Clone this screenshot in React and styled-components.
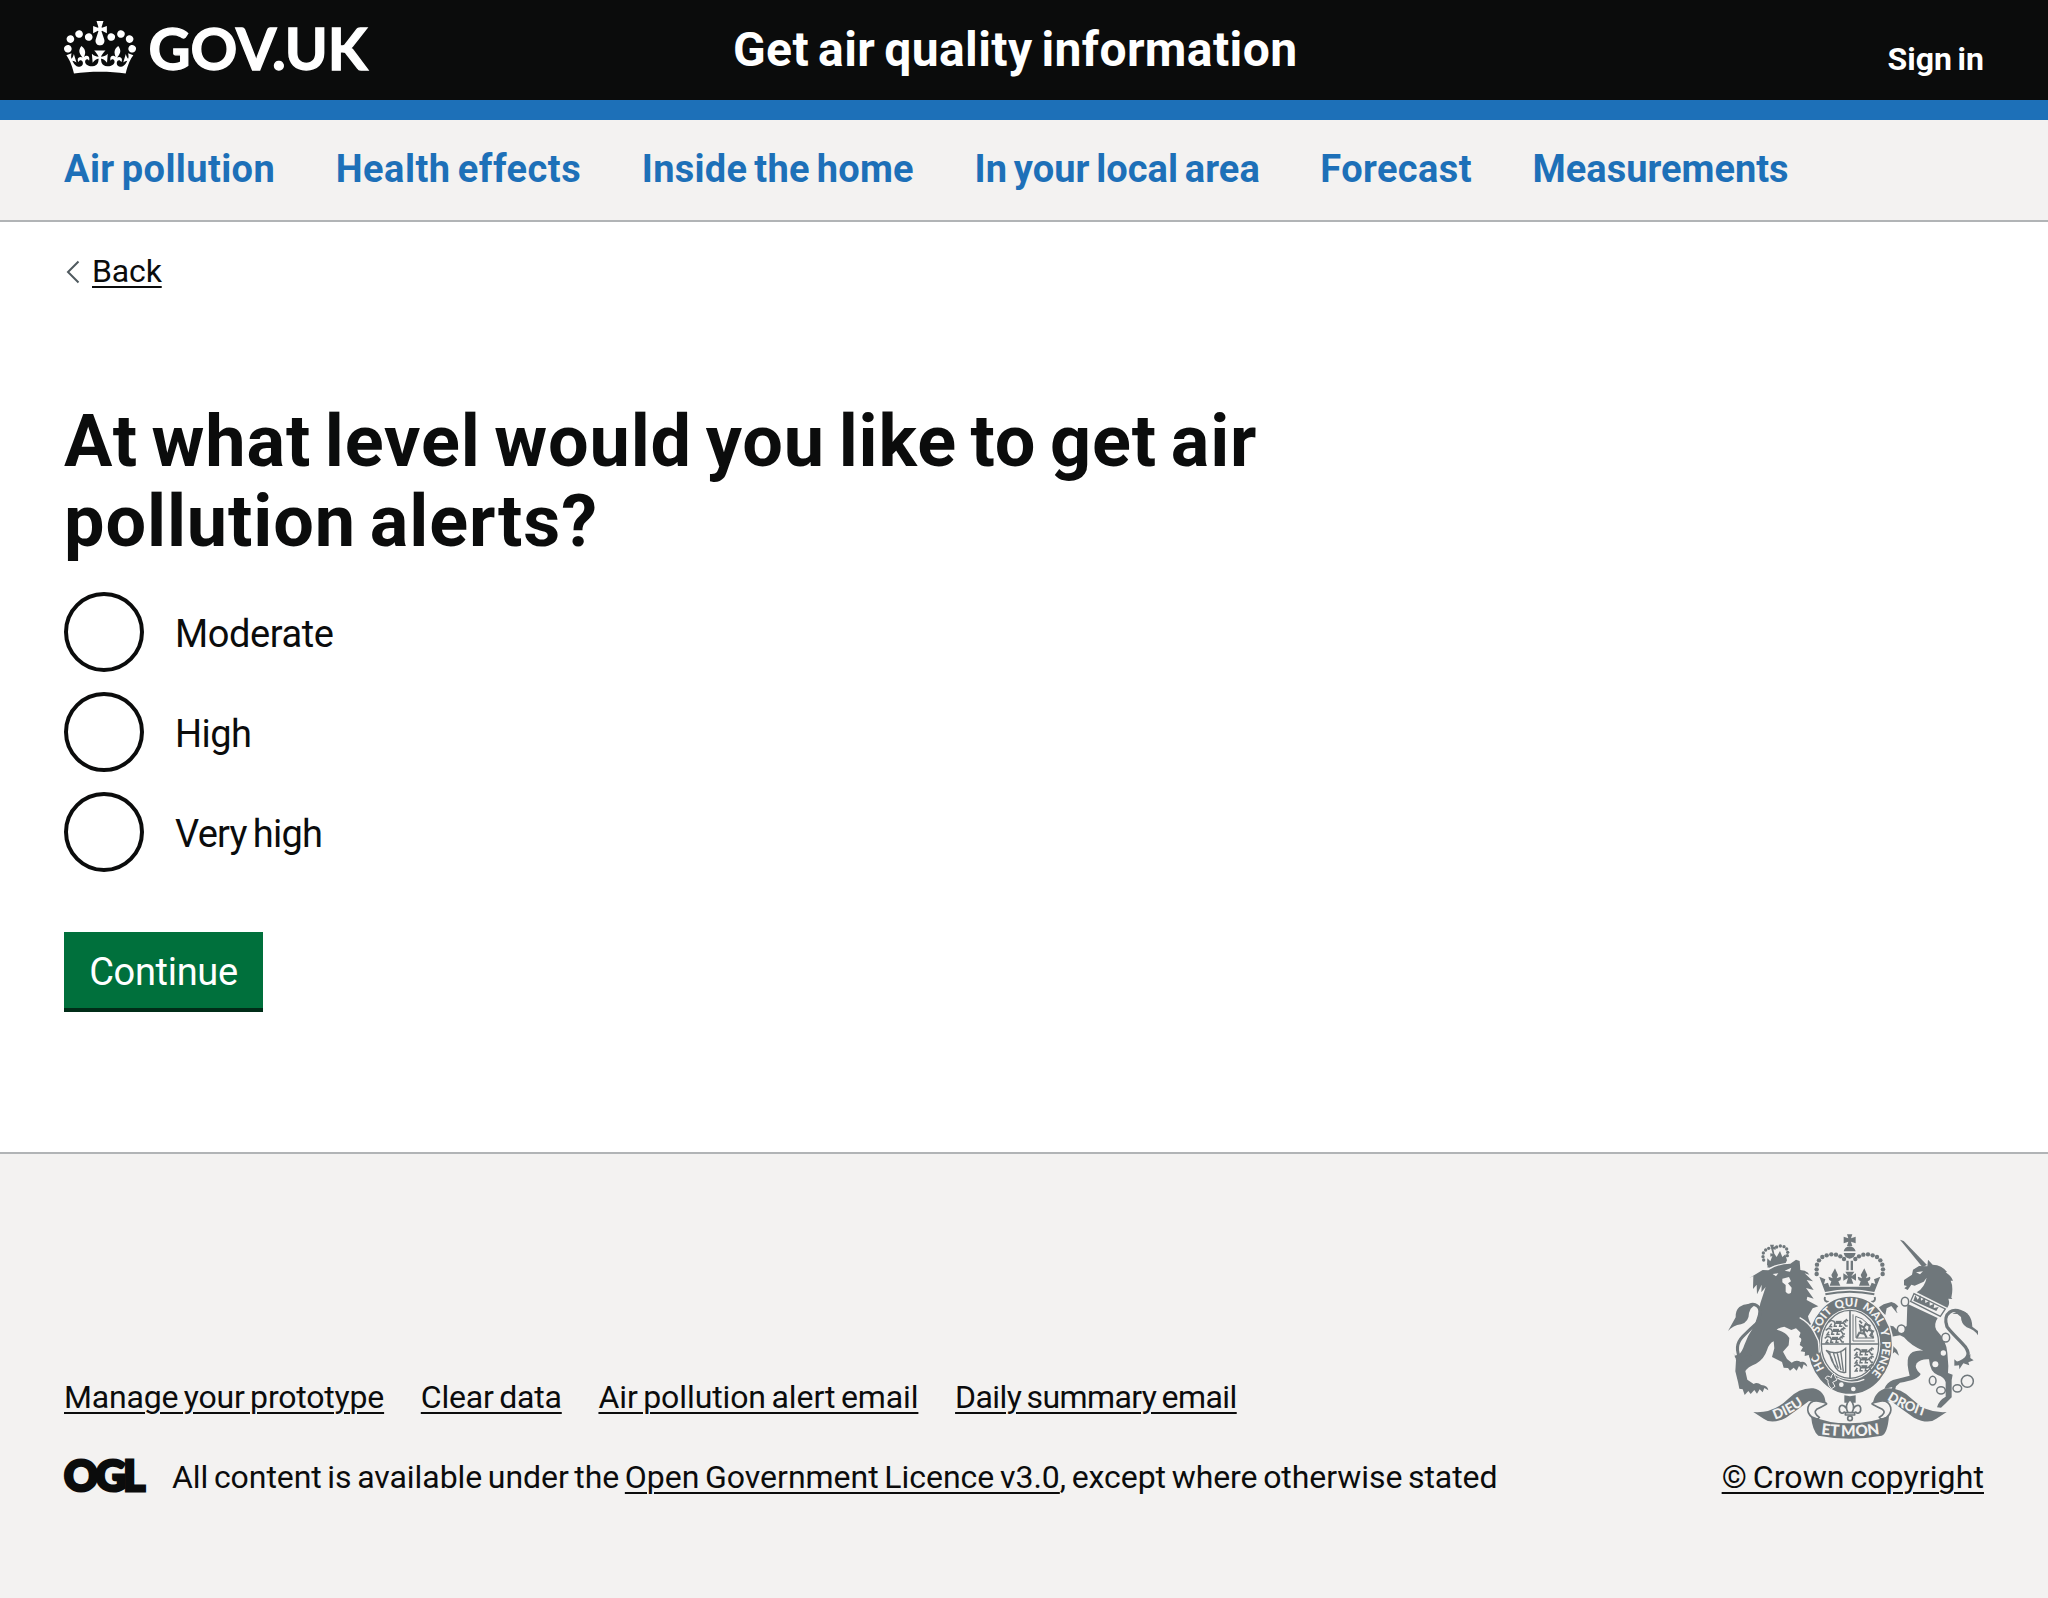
import React from "react";
import styled, { createGlobalStyle } from "styled-components";

const INK = "#0b0c0c";
const BLUE = "#1d70b8";
const PAPER = "#f3f2f1";
const RULE = "#b1b4b6";
const CREST = "#6f777b";

const GlobalStyle = createGlobalStyle`
  *, *::before, *::after { box-sizing: border-box; word-spacing: -0.07em; }
  body {
    margin: 0;
    background: #fff;
    color: ${INK};
    font-family: Roboto, "Noto Sans", sans-serif;
    font-size: 38px;
    line-height: 50px;
    -webkit-font-smoothing: antialiased;
  }
`;

const Page = styled.div`
  display: flex;
  flex-direction: column;
  min-height: 1598px;
`;

const Header = styled.header`
  display: grid;
  grid-template-columns: 669px 1fr auto;
  height: 120px;
  padding: 0 64px;
  background: ${INK};
  border-bottom: 20px solid ${BLUE};
  color: #fff;
`;

const Brand = styled.a`
  display: flex;
  align-items: flex-start;
  color: #fff;
  text-decoration: none;
  padding-top: 21px;
`;

const CrownIcon = styled.svg`
  width: 72px;
  height: 53px;
  flex: none;
`;

const Wordmark = styled.span`
  margin: -1px 0 0 12.5px;
  font-family: Lato, sans-serif;
  font-size: 58px;
  font-weight: 700;
  line-height: 56px;
  letter-spacing: -0.1px;
  -webkit-text-stroke: 1.3px #fff;
`;

const ServiceName = styled.a`
  padding-top: 20px;
  font-size: 48px;
  font-weight: 700;
  line-height: 60px;
  letter-spacing: ${(p) => p.$track}px;
  white-space: nowrap;
`;

const SignIn = styled.a`
  padding-top: 39px;
  font-size: 32px;
  font-weight: 700;
  line-height: 40px;
  letter-spacing: ${(p) => p.$track}px;
`;

const Nav = styled.nav`
  display: flex;
  gap: 60.6px;
  height: 102px;
  padding: 24px 64px 0;
  background: ${PAPER};
  border-bottom: 2px solid ${RULE};
`;

const NavLink = styled.a`
  color: ${BLUE};
  font-weight: 700;
  line-height: 50px;
  letter-spacing: ${(p) => p.$track}px;
  white-space: nowrap;
`;

const Main = styled.main`
  display: flex;
  flex-direction: column;
  align-items: flex-start;
  height: 930px;
  padding: 30px 64px 0;
`;

const TextLink = styled.a`
  color: ${INK};
  font-size: 32px;
  line-height: 40px;
  letter-spacing: ${(p) => p.$track}px;
  text-decoration: underline;
  text-decoration-thickness: 2px;
  text-underline-offset: 4px;
  white-space: nowrap;
`;

const BackRow = styled.div`
  display: flex;
  align-items: center;
  gap: 12px;
  height: 38px;
  padding-left: 2px;
`;

const Chevron = styled.svg`
  width: 14px;
  height: 24px;
  margin-top: 2px;
`;

const Question = styled.h1`
  width: 1260px;
  margin: 112px 0 0;
  font-size: 72px;
  font-weight: 700;
  line-height: 80px;
`;

const Line = styled.span`
  display: block;
  letter-spacing: ${(p) => p.$track}px;
  white-space: nowrap;
`;

const Radios = styled.div`
  display: flex;
  flex-direction: column;
  gap: 20px;
  margin-top: 30px;
`;

const RadioRow = styled.label`
  display: flex;
  align-items: center;
  gap: 31px;
  height: 80px;
`;

const RadioInput = styled.input`
  appearance: none;
  width: 80px;
  height: 80px;
  margin: 0;
  border: 4px solid ${INK};
  border-radius: 50%;
`;

const RadioText = styled.span`
  padding-top: 3px;
  letter-spacing: ${(p) => p.$track}px;
`;

const Button = styled.button`
  width: 199px;
  height: 80px;
  margin-top: 60px;
  padding: 0;
  border: 0;
  border-radius: 0;
  background: #00703c;
  box-shadow: inset 0 -4px 0 #002d18;
  color: #fff;
  font: inherit;
  line-height: 80px;
  letter-spacing: ${(p) => p.$track}px;
`;

const Footer = styled.footer`
  display: flex;
  justify-content: space-between;
  flex: 1;
  padding: 80px 64px 0;
  background: ${PAPER};
  border-top: 2px solid ${RULE};
`;

const FooterMeta = styled.div`
  display: flex;
  flex-direction: column;
  gap: 40px;
  padding-top: 143px;
`;

const FooterLinks = styled.div`
  display: flex;
  gap: 36.7px;
`;

const Licence = styled.div`
  display: flex;
  align-items: center;
  height: 40px;
  font-size: 32px;
  line-height: 40px;
  white-space: nowrap;
`;

const LicenceText = styled.span`
  letter-spacing: ${(p) => p.$track}px;
`;

const OglMark = styled.span`
  width: 108px;
  margin-top: -5px;
  font-family: Lato, sans-serif;
  font-size: 42px;
  font-weight: 900;
  letter-spacing: -2.6px;
  -webkit-text-stroke: 3px ${INK};
`;

const Copyright = styled.div`
  display: flex;
  flex-direction: column;
  align-items: flex-end;
`;

const Crest = styled.svg`
  width: 250px;
  height: 205px;
  margin: 0 6px 18px 0;
`;

const NAV = [
  ["Air pollution", 0.38],
  ["Health effects", 0.49],
  ["Inside the home", 0.25],
  ["In your local area", 0.03],
  ["Forecast", 0.38],
  ["Measurements", 0],
];

const LEVELS = [
  ["Moderate", -0.4],
  ["High", -0.6],
  ["Very high", -0.75],
];

const LINKS = [
  ["Manage your prototype", -0.19],
  ["Clear data", -0.19],
  ["Air pollution alert email", -0.1],
  ["Daily summary email", -0.57],
];

const MOTTO = [
  ["HO", 64],
  ["SOIT", 174],
  ["QUI", 264],
  ["MAL", 343],
  ["Y", 428],
  ["PENSE", 463],
];

function Crown() {
  return (
    <CrownIcon viewBox="0 0 132 97" aria-hidden="true">
      <path
        fill="currentColor"
        fillRule="evenodd"
        d="M25 30.2c3.5 1.5 7.7-.2 9.1-3.7 1.5-3.6-.2-7.8-3.9-9.2-3.6-1.4-7.6.3-9.1 3.9-1.4 3.5.3 7.5 3.9 9zM9 39.5c3.6 1.5 7.8-.2 9.2-3.7 1.5-3.6-.2-7.8-3.9-9.1-3.6-1.5-7.6.2-9.1 3.8-1.4 3.5.3 7.5 3.8 9zM4.4 57.2c3.5 1.5 7.7-.2 9.1-3.8 1.5-3.6-.2-7.7-3.9-9.1-3.5-1.5-7.6.3-9.1 3.8-1.4 3.5.3 7.6 3.9 9.1zm38.3-21.4c3.5 1.5 7.7-.2 9.1-3.8 1.5-3.6-.2-7.7-3.9-9.1-3.6-1.5-7.6.3-9.1 3.8-1.3 3.6.4 7.7 3.9 9.1zm64.4-5.6c-3.6 1.5-7.8-.2-9.1-3.7-1.5-3.6.2-7.8 3.8-9.2 3.6-1.4 7.7.3 9.2 3.9 1.3 3.5-.4 7.5-3.9 9zm15.9 9.3c-3.6 1.5-7.7-.2-9.1-3.7-1.5-3.6.2-7.8 3.7-9.1 3.6-1.5 7.7.2 9.2 3.8 1.5 3.5-.3 7.5-3.8 9zm4.7 17.7c-3.6 1.5-7.8-.2-9.2-3.8-1.5-3.6.2-7.7 3.9-9.1 3.6-1.5 7.7.3 9.2 3.8 1.3 3.5-.4 7.6-3.9 9.1zM89.3 35.8c-3.6 1.5-7.8-.2-9.2-3.8-1.4-3.6.2-7.7 3.9-9.1 3.6-1.5 7.7.3 9.2 3.8 1.4 3.6-.3 7.7-3.9 9.1zM69.7 17.7l8.9 4.7V9.3l-8.9 2.8c-.2-.3-.5-.6-.9-.9L72.4 0H59.6l3.5 11.2c-.3.3-.6.5-.9.9l-8.8-2.8v13.1l8.8-4.7c.3.3.6.7.9.9l-5 15.4v.1c-.2.8-.4 1.6-.4 2.4 0 4.1 3.1 7.5 7 8.1h.2c.3 0 .7.1 1 .1.4 0 .7 0 1-.1h.2c4-.6 7.1-4.1 7.1-8.1 0-.8-.1-1.7-.4-2.4V34l-5.1-15.4c.4-.2.7-.6 1-.9zM66 92.8c16.9 0 32.8 1.1 47.1 3.2 4-16.9 8.9-26.7 14-33.5l-9.6-3.4c1 4.9 1.1 7.2 0 10.2-1.5-1.4-3-4.3-4.2-8.7L108.6 76c2.8-2 5-3.2 7.5-3.3-4.4 9.4-10 11.9-13.6 11.2-4.3-.8-6.3-4.6-5.6-7.9 1-4.7 5.7-5.9 8-.5 4.3-8.7-3-11.4-7.6-8.8 7.1-7.2 7.9-13.5 2.1-21.1-8 6.1-8.1 12.3-4.5 20.8-4.7-5.4-12.1-2.5-9.5 6.2 3.4-5.2 7.9-2 7.2 3.1-.6 4.3-6.4 7.8-13.5 7.2-10.3-.9-10.9-8-11.2-13.8 2.5-.5 7.1 1.8 11 7.3L80.2 60c-4.1 4.4-8 5.3-12.3 5.4 1.4-4.4 8-11.6 8-11.6H55.5s6.4 7.2 7.9 11.6c-4.2-.1-8-1-12.3-5.4l1.4 16.4c3.9-5.5 8.5-7.7 10.9-7.3-.3 5.8-.9 12.8-11.1 13.8-7.2.6-12.9-2.9-13.5-7.2-.7-5 3.8-8.3 7.1-3.1 2.7-8.7-4.6-11.6-9.4-6.2 3.7-8.5 3.6-14.7-4.6-20.8-5.8 7.6-5 13.9 2.2 21.1-4.7-2.6-11.9.1-7.7 8.8 2.3-5.5 7.1-4.2 8.1.5.7 3.3-1.3 7.1-5.7 7.9-3.5.7-9-1.8-13.5-11.2 2.5.1 4.7 1.3 7.5 3.3l-4.7-15.4c-1.2 4.4-2.7 7.2-4.3 8.7-1.1-3-.9-5.3 0-10.2l-9.5 3.4c5 6.9 9.9 16.7 14 33.6 14.8-2.1 30.8-3.2 47.7-3.2z"
      />
    </CrownIcon>
  );
}

const CROWN_BEADS = [
  [350, 190], [350, 176], [351, 162], [357, 149], [367, 139], [380, 134],
  [394, 131], [408, 132], [421, 137], [432, 145],
  [548, 190], [549, 176], [547, 162], [541, 149], [531, 139], [518, 134],
  [504, 131], [490, 132], [477, 137], [466, 145],
];

const LION_BEADS = [
  [191, 148], [189, 138], [190, 127], [197, 118], [206, 113],
  [230, 109], [241, 106], [252, 108], [260, 115], [263, 125], [262, 135],
];

function LionPassant({ x, y }) {
  return (
    <g transform={`translate(${x} ${y})`} fill="none" stroke={CREST} strokeWidth="4.5">
      <path d="M0 6l8-6 9 3 3 6h22l7-7 5 4M10 10l-6 9h8M20 9l-2 9h8M36 9l-2 9h8M46 8l6 9h6M50 4l4-6 5 4" />
      <path d="M22 5h18" strokeWidth="7" />
    </g>
  );
}

function RoyalArms() {
  return (
    <Crest viewBox="84 70 750 615" fill={CREST} aria-hidden="true">
      <defs>
        <path id="garter" d="M424 512A97 113 0 0 1 353 400A97 113 0 0 1 547 400A97 113 0 0 1 476 512" />
        <path id="dieu" d="M224 627Q284 607 332 564" />
        <path id="etmon" d="M352 669Q450 685 550 668" />
        <path id="droit" d="M560 566Q620 604 698 624" />
      </defs>

      {/* lion */}
      <g>
        {LION_BEADS.map(([x, y]) => <circle key={`${x}-${y}`} cx={x} cy={y} r="5" />)}
        <path d="M210 102h12l-2 7 7-2v10l-7-1 3 13 7 10 10-18 7 18 9-8 5 18-4 8q-28 4-49 14l-7-8 1-20 9 9 6-16-6 2v-10l7 1z" />
        <path d="M201 168q26-14 54-19l1 4q-29 6-52 18z" />
        <path d="M188 178l17 1q28-19 66-20l17-12 11 4 2 27 13 2q11 4 14 12l-14-4 25 24-19-4 21 30-23-6 23 32-19-6-2 10 35 19-17 6-14 24q3 19 16 31l13 21 3 33-8-4-2 24-8-10-8 11-6-14-12 3 1-12-13-2 7-12-10-7 5-13-14-13-14 5-21-10q-13 1-23 9 28 7 38 25l-2 22-17 19 12 22 14 11q14-10 27-2 16-3 20 14l-11-7-5 15-9-10-7 14-9-9-11 9-6-8-13-1-5-17-30-15 7-26-2-21q-14 7-19 24-10 31-34 43-26 10-32 22l6 26 19 13q10-8 23 3 19 1 21 16l-12-7-5 13-9-9-8 13-8-11-11 12-7-9-11 12-6-17-10-2-4-20-8-32 2-33q0-8-5-14l13-3q11-10 17-29 9-27 28-55 13-27 20-70l16-49-13 16 1-23-14 29-1-29-11 13 1-39-13 7z" />
        <path d="M98 428l12 8 1-9 13 13 32-9q-11 15-17 18l-23 8 8-8-20-9 9-1z" />
        <path d="M122 446Q100 407 128 378Q151 354 173 335Q188 297 172 286Q157 274 136 291" fill="none" stroke={CREST} strokeWidth="9" />
        <path d="M164 283q-27-8-46 6-12 10-11 31l-23 41q15-17 39-20 24-7 24-34l5-13z" />
        <path d="M218 190l17-2-7 9zM254 180l20-9-4 12zM247 204l20-5 6 13-9 6 11 13-2 15q-9 7-16-3l0-20-10-8z" fill={PAPER} />
      </g>

      {/* unicorn */}
      <g>
        <path d="M600 87l11 4 70 72-14 6z" />
        <path d="M684 147l14 15q28 1 43 22l-4 1q17 11 22 25l-7 0q9 19 2 51l3 4-12-1q6 17-3 27l-92-46q24-14 30-44l-9 12-27 12-10-3-11 16-10-5 8-7-9-2 0-16 24-16 3-15 18-11 25 1z" />
        <path d="M648 185l21-3-9 9z" fill={PAPER} />
        <path d="M642 249l94 46-15 22-89-45z" fill={PAPER} stroke={CREST} strokeWidth="4" />
        <path d="M640 270l6-17 7 14 9-13 1 16 12-8 1 15 13-7 0 15 14-6-2 13 15-3-7 12z" />
        <path d="M622 279l91 43q-13 20-4 36 30 31 33 68l3 40-1 21 14 5-3 16 0 52-17 17-15 14-12-1q5-21 26-32l0-43q-3-15-24-22-23-8-26-47-24-2-37 12-9 15 12 32-8 18-62 26l-12 11-3 12-12 1 4-11-24 6q7-20 26-27l50-13q-10-38-4-56 9-22 45-19-35-13-58-40l-12-6-26 4-7 15 24 25 6 17-13-11-7 6-5-17-19-27 5-20-11-11-14 0 13 27-21-15-1-17 12-11 44 8 14 14 26-15z" />
        <path d="M551 281l23-7q23 5 25 28l-9 4-16-20-14 7-4 20-13-12-6-11z" />
        <path d="M769 459Q820 443 797 410C780 388 756 370 741 348C727 309 757 282 800 313" fill="none" stroke={CREST} strokeWidth="10" />
        <path d="M757 309q30-18 49 4 10 12 11 35l17 13v13q-10-16-34-24-17-11-17-31l-11-9z" />
        <path d="M763 446l12 10 14-6 22-20 0 12 10 7-16 6 3 9-18-6-12 18-1-12-14 1z" />
        <g fill={PAPER} stroke={CREST} strokeWidth="4.5">
          <ellipse cx="615" cy="273" rx="11" ry="13" />
          <ellipse cx="597" cy="297" rx="8" ry="9" stroke="none" />
          <ellipse cx="604" cy="356" rx="12" ry="13" />
          <ellipse cx="737" cy="381" rx="12" ry="13" />
          <circle cx="730" cy="427" r="8" stroke="none" />
          <circle cx="706" cy="461" r="9" stroke="none" />
          <ellipse cx="698" cy="510" rx="10" ry="13" />
          <ellipse cx="723" cy="539" rx="13" ry="11" />
          <ellipse cx="772" cy="533" rx="13" ry="11" />
          <circle cx="802" cy="512" r="18" />
        </g>
      </g>

      {/* imperial crown */}
      <g>
        {CROWN_BEADS.map(([x, y]) => <circle key={`${x}-${y}`} cx={x} cy={y} r="6.6" />)}
        <path d="M441 71h16l-4 12 14-5v20l-14-5 4 13h-16l4-13-14 5v-20l14 5zM431 122q3-14 18-15 14 1 18 15zM431 127h36q-3 15-18 17-15-2-18-17zM439 150h7v29h-7zM452 150h7v29h-7zM436 183h27l-9 14 14-9v22l-14-8 6 17h-21l5-17-14 8v-22l14 9z" />
        <path d="M405 173l9 20-4 10 12-5q4 11-7 14l6 13h-32l5-13q-10-3-8-14l12 5-4-10zM493 173l9 20-4 10 12-5q4 11-7 14l6 13h-32l5-13q-10-3-8-14l12 5-4-10z" />
        <path d="M358 198l18 8-4 14 12-4 4 12h122l5-12 11 4-4-14 19-8-18 46q-75-16-148 0z" />
        <path d="M375 259q-5 14 12 15M524 259q5 14-12 15M376 251q73-16 147 0" fill="none" stroke={CREST} strokeWidth="6" />
      </g>

      {/* garter */}
      <ellipse cx="450" cy="404" rx="128" ry="148" stroke={PAPER} strokeWidth="5" />
      <ellipse cx="450" cy="401" rx="91" ry="107" fill={PAPER} />
      <ellipse cx="450" cy="401" rx="86" ry="102" fill="none" stroke={CREST} strokeWidth="4" />
      <path d="M450 299v204M364 400h172" fill="none" stroke={CREST} strokeWidth="5" />
      <path d="M459 311v80h65M467 317q43 10 54 65h-53z" fill="none" stroke={CREST} strokeWidth="3" />
      <LionPassant x={385} y={329} />
      <LionPassant x={377} y={353} />
      <LionPassant x={374} y={377} />
      <LionPassant x={462} y={414} />
      <LionPassant x={462} y={438} />
      <LionPassant x={462} y={462} />
      <path d="M470 381l8-15 12 3 4-12-11 3-3-16 12 6 5-10 12 5-2 13 12 4-8 12 10 8M491 364l9 17M478 330l8 8M504 363l-14-10" fill="none" stroke={CREST} strokeWidth="6" />
      <path d="M378 419q35 17 59-6v72q-24 4-36-25-7-27-23-41zM389 425q3 26 20 45M400 426l15 48M411 424l12 54M422 420l8 62" fill="none" stroke={CREST} strokeWidth="4" />
      <path d="M398 491q53 41 110-3l-16 33-68 10-26-15z" />
      <g fill={PAPER} fontFamily="Lato, sans-serif" fontWeight="900" fontSize="34">
        {MOTTO.map(([word, offset]) => (
          <text key={word}><textPath href="#garter" startOffset={offset}>{word}</textPath></text>
        ))}
      </g>
      <path d="M402 487q-9 6-8 14-13-10-18 2 12 5 8 12 1 12 11 19l10-7-7-12 13-7q-7-11-9-21z" stroke={PAPER} strokeWidth="3" />
      <path d="M412 502q39 23 81 4" fill="none" stroke={PAPER} strokeWidth="4" />
      <circle cx="424" cy="522" r="7" fill={PAPER} />
      <circle cx="460" cy="535" r="7" fill={PAPER} />
      <path d="M299 321q30 16 44 44l12 25 3 36-8-4-2 24-8-10-8 11-6-14-12 3 1-12-13-2 7-12-10-7 5-13z" />
      <path d="M299 321q30 16 44 44l12 25 3 36" fill="none" stroke={PAPER} strokeWidth="4" />

      {/* badge below the garter */}
      <path d="M433 554q17 5 34 0v22h-34z" />
      <g fill={PAPER} stroke={CREST} strokeWidth="5" strokeLinejoin="round">
        <path d="M444 604C440 586 422 576 418 592C416 608 430 612 434 602M456 604C460 586 478 576 482 592C484 608 470 612 466 602" />
        <path d="M450 566Q468 584 456 606H444Q432 584 450 566zM436 606h28v7h-28z" />
        <circle cx="450" cy="623" r="7" />
      </g>

      {/* motto scroll */}
      <g>
        <path d="M160 604q60 5 105-40 35-34 75-31 37 8 37 49l-50-11q-34 26-69 50-43 22-67 3z" />
        <path d="M740 604q-60 5-105-40-35-34-75-31-37 8-42 49l55-11q34 26 69 50 43 22 67 3z" />
        <path d="M376 582q12-4-14-9-31-8-38 17-4 16 12 30 16 10 22 0-20-14-8-24 12-6 26-14zM520 582q-12-4 14-9 31-8 38 17 4 16-12 30-16 10-22 0 23-14 9-24-12-6-27-14z" fill={PAPER} stroke={CREST} strokeWidth="5" />
        <path d="M333 615q52 24 117 23t117-23q-4 53-22 60-95 18-190 0-18-15-22-60z" />
        <g fill={PAPER} fontFamily="Lato, sans-serif" fontWeight="900">
          <text fontSize="41"><textPath href="#dieu" startOffset="1">DIEU</textPath></text>
          <text fontSize="46"><textPath href="#etmon" startOffset="11">ET MON</textPath></text>
          <text fontSize="40"><textPath href="#droit" startOffset="1">DROIT</textPath></text>
        </g>
      </g>
    </Crest>
  );
}

export default function App() {
  return (
    <Page>
      <GlobalStyle />
      <Header>
        <Brand>
          <Crown />
          <Wordmark>GOV.UK</Wordmark>
        </Brand>
        <ServiceName $track={0.4}>Get air quality information</ServiceName>
        <SignIn $track={0}>Sign in</SignIn>
      </Header>
      <Nav>
        {NAV.map(([label, track]) => <NavLink key={label} $track={track}>{label}</NavLink>)}
      </Nav>
      <Main>
        <BackRow>
          <Chevron viewBox="0 0 14 24" aria-hidden="true">
            <path d="M12.5 1.5L2 12l10.500 10.500" fill="none" stroke="#505a5f" strokeWidth="2" />
          </Chevron>
          <TextLink $track={-0.15}>Back</TextLink>
        </BackRow>
        <Question>
          <Line $track={0.86}>At what level would you like to get air</Line>
          <Line $track={0.9}>pollution alerts?</Line>
        </Question>
        <Radios>
          {LEVELS.map(([label, track]) => (
            <RadioRow key={label}>
              <RadioInput type="radio" name="level" />
              <RadioText $track={track}>{label}</RadioText>
            </RadioRow>
          ))}
        </Radios>
        <Button $track={-0.3}>Continue</Button>
      </Main>
      <Footer>
        <FooterMeta>
          <FooterLinks>
            {LINKS.map(([label, track]) => <TextLink key={label} $track={track}>{label}</TextLink>)}
          </FooterLinks>
          <Licence>
            <OglMark>OGL</OglMark>
            <LicenceText $track={-0.06}>
              All content is available under the <TextLink $track={-0.02}>Open Government Licence v3.0</TextLink>, except where otherwise stated
            </LicenceText>
          </Licence>
        </FooterMeta>
        <Copyright>
          <RoyalArms />
          <TextLink $track={0.11}>© Crown copyright</TextLink>
        </Copyright>
      </Footer>
    </Page>
  );
}
